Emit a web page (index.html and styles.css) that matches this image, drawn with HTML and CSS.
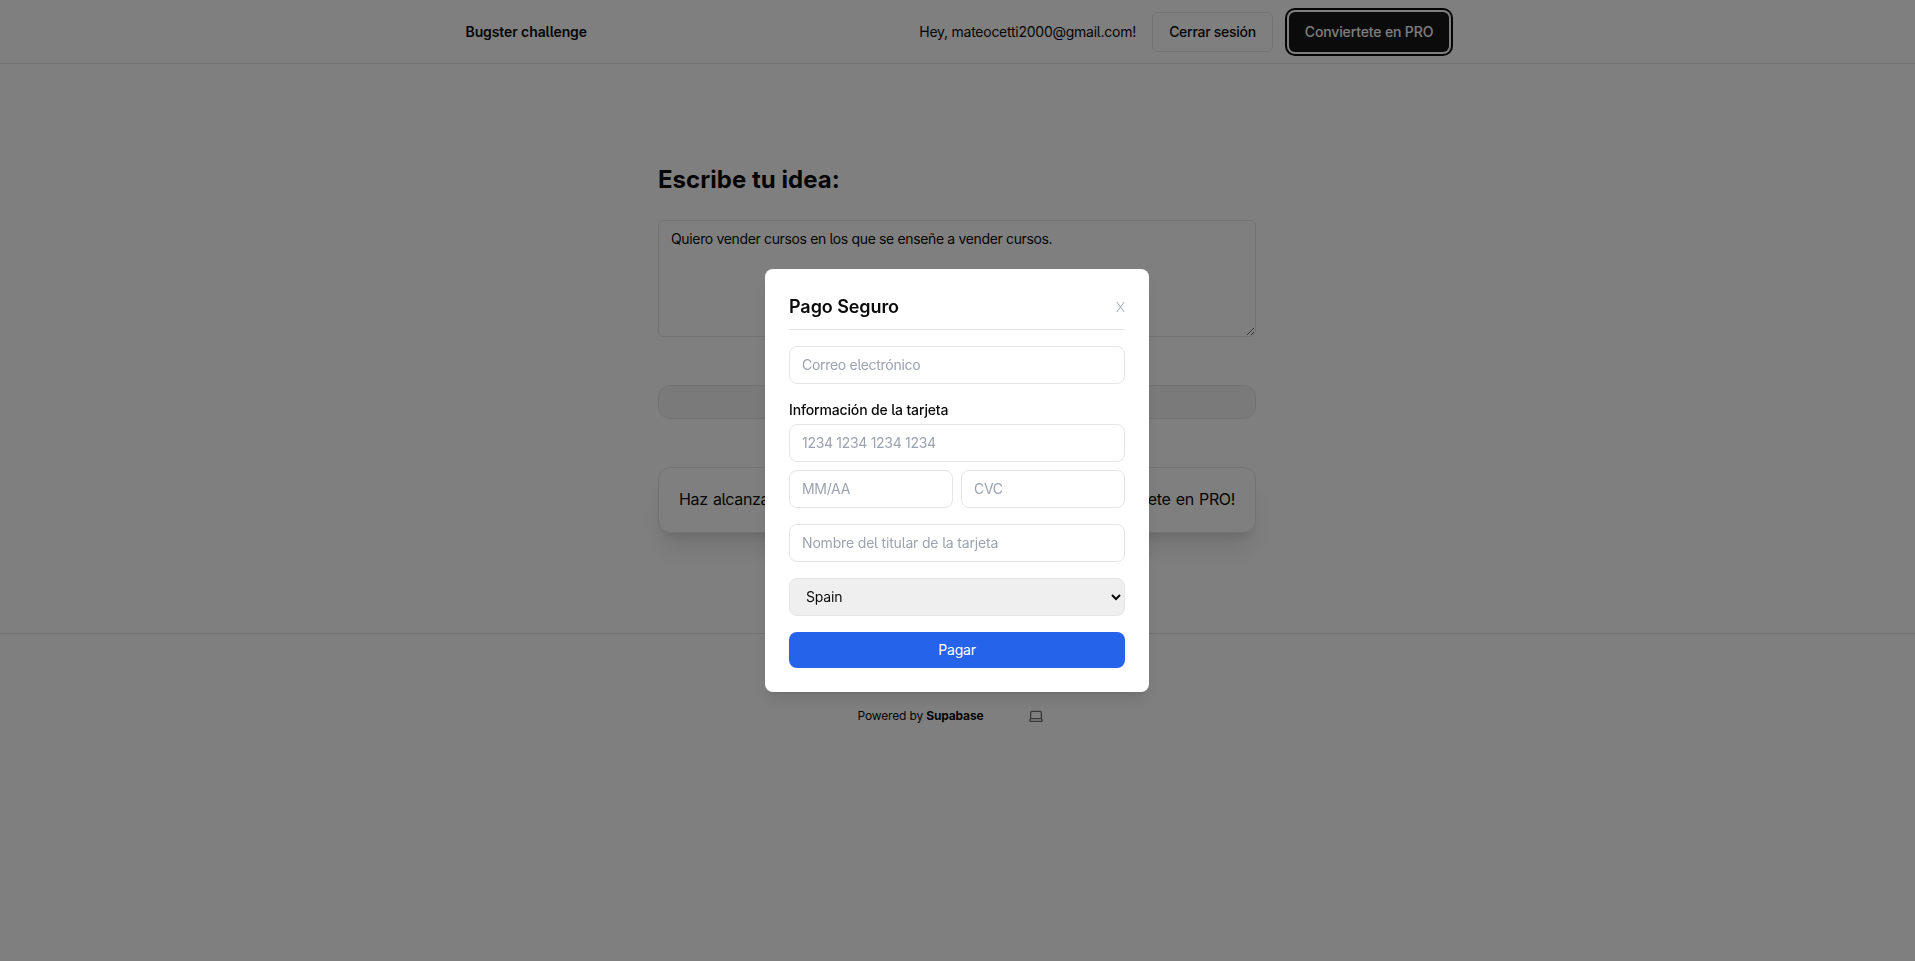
FILE: index.html
```html
<!DOCTYPE html>
<html lang="es">
<head>
<meta charset="utf-8">
<title>Bugster challenge</title>
<link rel="stylesheet" href="styles.css">
</head>
<body>
<nav class="nav">
  <div class="nav-inner">
    <a class="brand">Bugster challenge</a>
    <div class="nav-actions">
      <span class="greeting">Hey, mateocetti2000@gmail.com!</span>
      <button class="btn btn-outline">Cerrar sesión</button>
      <button class="btn btn-pro">Conviertete en PRO</button>
    </div>
  </div>
</nav>
<main class="main">
  <h1 class="heading">Escribe tu idea:</h1>
  <textarea class="idea">Quiero vender cursos en los que se enseñe a vender cursos.</textarea>
  <div class="result"></div>
  <div class="limit-card">Haz alcanzado el límite diario de búsquedas gratuitas. ¡Conviertete en PRO!</div>
</main>
<footer class="footer">
  <p class="powered">Powered by <b>Supabase</b></p>
  <button class="theme" aria-label="Tema">
    <svg width="16" height="16" viewBox="0 0 24 24" fill="none" stroke="currentColor" stroke-width="2" stroke-linecap="round" stroke-linejoin="round"><path d="M20 16V7a2 2 0 0 0-2-2H6a2 2 0 0 0-2 2v9m16 0H4m16 0 1.28 2.55a1 1 0 0 1-.9 1.45H3.62a1 1 0 0 1-.9-1.45L4 16"/></svg>
  </button>
</footer>
<div class="overlay">
  <form class="modal">
    <header class="modal-header">
      <h2 class="modal-title">Pago Seguro</h2>
      <button type="button" class="close" aria-label="Cerrar"><svg width="9" height="12" viewBox="0 0 9 12" fill="none" stroke="currentColor"><path d="M.8 1 8.2 11M8.2 1 .8 11"/></svg></button>
    </header>
    <input class="field email" placeholder="Correo electrónico">
    <label class="label">Información de la tarjeta</label>
    <input class="field number" placeholder="1234 1234 1234 1234">
    <div class="row">
      <input class="field" placeholder="MM/AA">
      <input class="field" placeholder="CVC">
    </div>
    <input class="field holder" placeholder="Nombre del titular de la tarjeta">
    <select class="field country"><option>Spain</option></select>
    <button type="button" class="pay">Pagar</button>
  </form>
</div>
</body>
</html>
```
FILE: styles.css
```css
* { box-sizing: border-box; margin: 0; }
body { font-family: Inter, "Liberation Sans", sans-serif; font-size: 14px; line-height: 20px; color: #0a0a0a; background: #fff; font-feature-settings: "cv05"; }
button, input, select, textarea { font: inherit; color: inherit; letter-spacing: inherit; font-feature-settings: inherit; }
.nav { height: 64px; border-bottom: 1px solid #e5e5e5; }
.nav-inner { width: 1024px; height: 63px; margin: 0 auto; padding: 0 20.5px 0 20px; display: flex; align-items: center; justify-content: space-between; }
.brand { font-weight: 600; letter-spacing: -.1px; }
.nav-actions { display: flex; align-items: center; gap: 16px; }
.greeting { letter-spacing: -.26px; padding-top: 1px; }
.btn { height: 40px; border-radius: 6px; font-weight: 500; white-space: nowrap; padding: 1px 0 0; }
.btn-outline { width: 121px; border: 1px solid #e5e5e5; background: #fff; letter-spacing: -.27px; }
.btn-pro { width: 160px; border: 0; background: #171717; color: #fafafa; box-shadow: 0 0 0 2px #fff, 0 0 0 4px #0a0a0a; letter-spacing: -.14px; }
.main { width: 598px; height: 569px; margin: 0 auto; padding-top: 100px; display: flex; flex-direction: column; position: relative; left: -.5px; }
.heading { font-size: 24px; line-height: 32px; font-weight: 700; letter-spacing: .04px; }
.idea { height: 117px; margin-top: 24px; padding: 8px 12px; border: 1px solid #e5e5e5; border-radius: 6px; background: #fff; resize: vertical; letter-spacing: -.35px; }
.result { height: 34px; margin-top: 48px; border: 1px solid #e5e5e5; border-radius: 12px; background: #f5f5f5; }
.limit-card { height: 66px; margin-top: 48px; padding: 19px 20px; border: 1px solid #e5e5e5; border-radius: 12px; font-size: 16px; line-height: 24px; white-space: nowrap; text-align-last: justify; letter-spacing: -.35px; box-shadow: 0 20px 25px -5px #0000001a, 0 8px 10px -6px #0000001a; background: #fff; }
.footer { height: 166px; padding: 0 1px 2px 0; border-top: 1px solid #e5e5e5; display: flex; align-items: center; justify-content: center; gap: 33px; font-size: 12px; line-height: 16px; }
.powered { letter-spacing: -.16px; }
.theme { width: 40px; height: 36px; border: 0; padding: 0; background: none; color: #737373; display: flex; align-items: center; justify-content: center; }
.overlay { position: fixed; inset: 0; padding-right: 1px; background: rgba(0,0,0,.5); display: flex; align-items: center; justify-content: center; }
.modal { width: 384px; padding: 24px; background: #fff; border-radius: 8px; box-shadow: 0 10px 15px -3px #0000001a, 0 4px 6px -4px #0000001a; display: flex; flex-direction: column; }
.modal-header { display: flex; justify-content: space-between; align-items: center; padding-bottom: 8px; border-bottom: 1px solid #e5e5e5; margin-bottom: 16px; }
.modal-title { font-size: 18px; line-height: 28px; font-weight: 600; letter-spacing: -.08px; }
.close { display: flex; border: 0; padding: 0; background: none; color: #9ca3af; }
.field { width: 100%; height: 38px; padding: 7px 12px 8px; border: 1px solid #e5e5e5; border-radius: 8px; background: #fff; letter-spacing: -.3px; }
.field::placeholder { color: #9ca3af; opacity: 1; }
.email { margin-bottom: 16px; }
.label { font-weight: 500; margin-bottom: 4px; letter-spacing: -.15px; }
.row { display: grid; grid-template-columns: 1fr 1fr; gap: 8px; margin: 8px 0 16px; }
.holder { letter-spacing: -.17px; }
.country { background: #efefef; margin: 16px 0; letter-spacing: -.2px; }
.pay { height: 36px; border: 0; border-radius: 8px; background: #2563eb; color: #fff; letter-spacing: -.2px; }
```
